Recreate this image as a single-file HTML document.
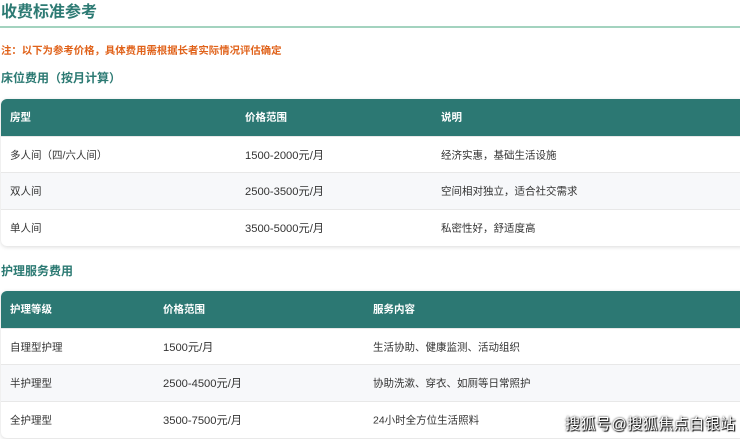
<!DOCTYPE html>
<html><head><meta charset="utf-8"><style>
*{margin:0;padding:0;box-sizing:border-box}
body{width:740px;height:439px;overflow:hidden;background:#fff;font-family:"Liberation Sans","Noto Sans CJK SC",sans-serif;position:relative}
.t{position:absolute;left:1px;top:-2px;font-size:16px;font-weight:bold;color:#2c7a73}
.line{position:absolute;left:0;top:26px;width:740px;height:2px;background:#a3d3bf}
.note{position:absolute;left:1px;top:42px;font-size:10.4px;font-weight:bold;color:#e0621a}
.h{position:absolute;left:1px;font-size:12px;font-weight:bold;color:#2c7a73}
.tb{position:absolute;left:1px;width:745px;border-radius:6px;overflow:hidden;box-shadow:0 1px 4px rgba(0,0,0,.15);background:#fff}
.r{height:36.7px;position:relative;font-size:10.5px;color:#333;border-top:1px solid #e8e8e8}
.r.hd{background:#2c7873;color:#fff;font-weight:bold;border:none}
.r.alt{background:#f7f8fa}
.r span{position:absolute;top:50%;transform:translateY(-50%)}
.n{font-size:11.2px}
.wm{position:absolute;left:565px;top:413px;font-size:15px;color:#fff;text-shadow:0 0 2px #000,1px 1px 1px #000;letter-spacing:0.5px}
</style></head><body>
<div class="t">收费标准参考</div>
<div class="line"></div>
<div class="note">注：以下为参考价格，具体费用需根据长者实际情况评估确定</div>
<div class="h" style="top:69px">床位费用（按月计算）</div>
<div class="tb" style="top:99px">
<div class="r hd"><span style="left:9px">房型</span><span style="left:244px">价格范围</span><span style="left:440px">说明</span></div>
<div class="r"><span style="left:9px">多人间（四/六人间）</span><span class="n" style="left:244px">1500-2000元/月</span><span style="left:440px">经济实惠，基础生活设施</span></div>
<div class="r alt"><span style="left:9px">双人间</span><span class="n" style="left:244px">2500-3500元/月</span><span style="left:440px">空间相对独立，适合社交需求</span></div>
<div class="r"><span style="left:9px">单人间</span><span class="n" style="left:244px">3500-5000元/月</span><span style="left:440px">私密性好，舒适度高</span></div>
</div>
<div class="h" style="top:262px">护理服务费用</div>
<div class="tb" style="top:291px">
<div class="r hd"><span style="left:9px">护理等级</span><span style="left:162px">价格范围</span><span style="left:372px">服务内容</span></div>
<div class="r"><span style="left:9px">自理型护理</span><span class="n" style="left:162px">1500元/月</span><span style="left:372px">生活协助、健康监测、活动组织</span></div>
<div class="r alt"><span style="left:9px">半护理型</span><span class="n" style="left:162px">2500-4500元/月</span><span style="left:372px">协助洗漱、穿衣、如厕等日常照护</span></div>
<div class="r"><span style="left:9px">全护理型</span><span class="n" style="left:162px">3500-7500元/月</span><span style="left:372px">24小时全方位生活照料</span></div>
</div>
<div class="wm">搜狐号@搜狐焦点白银站</div>
</body></html>
